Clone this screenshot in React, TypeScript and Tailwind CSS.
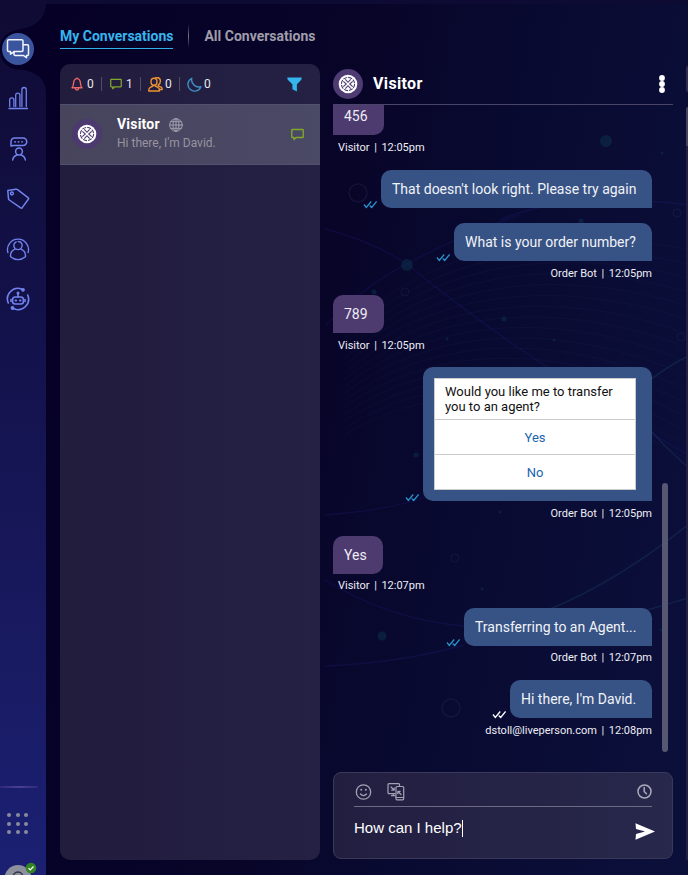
import React from "react";

const iconBase = { fill: "none", strokeLinecap: "round", strokeLinejoin: "round" } as const;

function Backdrop() {
  const waves = Array.from({ length: 16 }, (_, i) => i);
  return (
    <svg className="absolute inset-0" width="688" height="875" viewBox="0 0 688 875" fill="none">
      <g stroke="#2a4a80" strokeOpacity="0.09">
        {waves.map((i) => (
          <path key={i} d={`M345 ${330 + i * 7}C440 ${240 + i * 9} 570 ${225 + i * 11} 688 ${250 + i * 14}`} />
        ))}
      </g>
      <g stroke="#2b2a9a" strokeOpacity="0.2" strokeWidth="1.3">
        <path d="M325 229Q370 240 407 264Q460 235 520 215" />
        <path d="M407 264Q365 285 325 326" />
        <path d="M407 264Q510 350 688 455" />
        <path d="M325 515Q390 510 425 497Q500 490 560 470" />
        <path d="M325 580Q390 620 464 626" />
        <path d="M325 666Q400 663 464 645" />
        <path d="M500 220Q570 190 688 205" />
      </g>
      <g stroke="#27557c" strokeOpacity="0.25" strokeWidth="1.6">
        <path d="M520 620Q600 595 688 525" />
        <path d="M640 612Q665 605 688 598" />
        <path d="M650 380Q670 365 688 356" />
        <path d="M652 432Q670 452 688 467" />
      </g>
      <g stroke="#34345c" strokeOpacity="0.28">
        <circle cx="358" cy="193" r="9" strokeWidth="1.5" />
        <circle cx="451" cy="708" r="9" strokeWidth="1.5" />
        <circle cx="405" cy="292" r="4" />
        <circle cx="677" cy="213" r="4" />
        <circle cx="681" cy="337" r="4" />
        <circle cx="455" cy="558" r="4" />
      </g>
      <g fill="#0e4358" fillOpacity="0.38">
        <circle cx="606" cy="141" r="6" />
        <circle cx="407" cy="265" r="6" />
        <circle cx="382" cy="636" r="4.5" />
        <circle cx="374" cy="292" r="2.5" />
        <circle cx="416" cy="455" r="2.5" />
        <circle cx="504" cy="319" r="2.5" />
        <circle cx="581" cy="221" r="2.5" />
        <circle cx="662" cy="153" r="1.5" />
        <circle cx="447" cy="339" r="1.5" />
        <circle cx="554" cy="340" r="1.5" />
        <circle cx="482" cy="589" r="1.5" />
        <circle cx="661" cy="630" r="1.5" />
        <circle cx="500" cy="512" r="1.5" />
      </g>
    </svg>
  );
}

function BarsIcon() {
  return (
    <svg {...iconBase} width="24" height="24" viewBox="0 0 24 24" stroke="#7183ed" strokeWidth="1.3">
      <path d="M3 22.500h18.500M3.700 20.500V14a2.100 2.100 0 0 1 4.200 0V20.500M9.700 20.500V9.200a2.100 2.100 0 0 1 4.200 0V20.500M15.900 20.500V3.700a2.200 2.200 0 0 1 4.400 0V20.500" />
    </svg>
  );
}

function ConsultIcon() {
  return (
    <svg {...iconBase} width="24" height="26" viewBox="0 0 24 26" stroke="#7183ed" strokeWidth="1.5">
      <path d="M5 10V5.500a3.500 3.500 0 0 1 3.500-3.500h8.500a3.700 3.700 0 0 1 0 7.500H7.500L5 10Z" />
      <path d="M9 5.800h.1M12.500 5.800h.1M16 5.800h.1" strokeWidth="1.800" />
      <circle cx="13" cy="15.500" r="3.400" />
      <path d="M6.700 24c.4-2.500 2-4.300 4.300-5M15 19c2.300.7 3.900 2.500 4.300 5" />
    </svg>
  );
}

function TagIcon() {
  return (
    <svg {...iconBase} width="24" height="24" viewBox="0 0 24 24" stroke="#7183ed" strokeWidth="1.5">
      <path d="M1.800 3.500 9.800 2.300Q11 2.200 11.600 2.700L22.300 10.900Q23 11.400 22.500 12L16 20.900Q15.500 21.500 14.700 20.900L3.300 13Q2.700 12.600 2.500 11.800L1.800 3.500Z" />
      <circle cx="5.900" cy="6.500" r="1.400" />
    </svg>
  );
}

function ProfileIcon() {
  return (
    <svg {...iconBase} width="24" height="24" viewBox="0 0 24 24" stroke="#7183ed" strokeWidth="1.4">
      <path d="M1.900 15.500A10.500 10.500 0 1 1 22.100 15.500M5 20A10.500 10.500 0 0 0 19 20" />
      <path d="M8.900 11.300A4 4 0 0 1 10.200 4.900M12.300 4.500A4 4 0 0 1 15.100 11.300" />
      <path d="M9 12.200C6 13.400 4.300 16.300 4.500 19.500M15 12.200C18 13.400 19.700 16.300 19.500 19.500M9.600 11.900Q12 13.300 14.400 11.900" />
    </svg>
  );
}

function BotIcon() {
  return (
    <svg {...iconBase} width="24" height="24" viewBox="0 0 24 24" stroke="#7183ed" strokeWidth="1.600">
      <path d="M2.300 16A10.500 10.500 0 0 1 16 2.200M21.700 8A10.500 10.500 0 0 1 8 21.800" />
      <circle cx="17" cy="2.800" r="1.100" fill="#7183ed" />
      <circle cx="6.500" cy="21" r="1.100" fill="#7183ed" />
      <rect x="6.500" y="10" width="11" height="7" rx="2.800" />
      <path d="M12 10V6.500M5 12.500v2M19 12.500v2" />
      <circle cx="12" cy="6" r="1.500" fill="#7183ed" stroke="none" />
      <path d="M9.500 13.500h.6M14 13.500h.6" strokeWidth="2" />
    </svg>
  );
}

function ChatsIcon() {
  return (
    <svg {...iconBase} width="24" height="22" viewBox="0 0 24 22" stroke="#f3f4fa" strokeWidth="1.500">
      <path d="M8 13.800 4.500 16V13.500H2.700Q1.500 13.500 1.500 12.300V3Q1.500 1.800 2.700 1.800h13.100Q17 1.800 17 3v9.300q0 1.200-1.200 1.200H8Z" />
      <path d="M17.500 6.800H21.300Q22.500 6.800 22.500 8v8.300q0 1.200-1.200 1.200h-.8v2.200L17.500 17.500H9.200Q8 17.500 8 16.300v-2.500" />
    </svg>
  );
}

function Sidebar() {
  return (
    <aside className="relative flex w-[46px] shrink-0 flex-col">
      <svg className="absolute inset-0" width="46" height="875" viewBox="0 0 46 875">
        <defs>
          <linearGradient id="rail" x1="0" y1="0" x2="0" y2="1">
            <stop offset="0" stopColor="#0f0b34" />
            <stop offset="0.35" stopColor="#131149" />
            <stop offset="0.7" stopColor="#18195e" />
            <stop offset="1" stopColor="#1b2073" />
          </linearGradient>
        </defs>
        <path
          fill="url(#rail)"
          d="M0 0H46V4C45 19 36 25 25 28L14 30.500C7 32.500 1 39 0 45V53C1 62 9 69 18 69.500C34 70 46 78 46 93V875H0Z"
        />
      </svg>
      <nav className="relative flex flex-col items-center pr-[10px] pt-[33px]">
        <div className="flex size-8 items-center justify-center rounded-full bg-[#3b549e]"><ChatsIcon /></div>
        <div className="mt-[21px]"><BarsIcon /></div>
        <div className="mt-[26px]"><ConsultIcon /></div>
        <div className="mt-[25px]"><TagIcon /></div>
        <div className="mt-[26px]"><ProfileIcon /></div>
        <div className="mt-[26px]"><BotIcon /></div>
      </nav>
      <div className="relative mt-auto h-[89px]">
        <div className="h-[2px] w-[38px] bg-linear-to-r from-[#2c2a78] via-[#4a4190] to-[#2c297d]" />
        <div className="ml-[7px] mt-[25px] grid w-[21px] grid-cols-3 gap-x-[4.700px] gap-y-[4.500px]">
          {Array.from({ length: 9 }, (_, i) => (
            <span key={i} className="size-1 rounded-full bg-[#898b9c]" />
          ))}
        </div>
        <svg className="absolute left-0 top-[75px]" width="44" height="14" viewBox="0 0 44 14">
          <circle cx="18" cy="17.500" r="13.500" fill="#8c8f9e" />
          <circle cx="18" cy="16" r="5" fill="none" stroke="#313342" strokeWidth="1.300" />
          <circle cx="31" cy="7" r="5.300" fill="#318421" />
          <path d="m28.500 7.200 1.800 1.700 3.200-3.400" fill="none" stroke="white" strokeWidth="1.300" />
        </svg>
      </div>
    </aside>
  );
}

function Emblem({ bg }: { bg: string }) {
  return (
    <svg width="30" height="30" viewBox="0 0 30 30">
      <circle cx="15" cy="15" r="15" fill={bg} />
      <circle cx="15" cy="15" r="9.300" fill="white" />
      <g fill="none" stroke="#4b3b70" strokeWidth="1.100">
        <circle cx="15" cy="15" r="6.600" strokeDasharray="4.100 1.083" strokeWidth="1.100" />
        <path d="m12.300 10.300 2.700 3 2.700-3M12.300 19.700l2.700-3 2.700 3M10.300 12.300l3 2.700-3 2.700M19.700 12.300l-3 2.700 3 2.700" />
      </g>
    </svg>
  );
}

function BubbleIcon({ size = 13 }: { size?: number }) {
  return (
    <svg {...iconBase} width={size} height={size} viewBox="0 0 13 13" stroke="#82a829" strokeWidth="1.350">
      <path d="M1.300 1.500h10.400q.5 0 .5.500v7q0 .5-.5.500H5L3 11.600V9.500H1.300q-.5 0-.5-.5V2q0-.5.500-.5Z" />
    </svg>
  );
}

function CountIcon({ kind }: { kind: string }) {
  if (kind === "bell")
    return (
      <svg {...iconBase} width="12" height="14" viewBox="0 0 12 14" stroke="#ed6668" strokeWidth="1.350">
        <path d="M6 1.300V.8M1 10.700c1-.9 1.400-2 1.500-4.200C2.700 3.500 4 1.600 6 1.600s3.300 1.900 3.500 4.900c.1 2.200.5 3.300 1.500 4.200H1ZM4.500 12a1.600 1.600 0 0 0 3 0" />
      </svg>
    );
  if (kind === "group")
    return (
      <svg {...iconBase} width="15" height="15" viewBox="0 0 15 15" stroke="#eb9232" strokeWidth="1.400">
        <ellipse cx="6" cy="4.700" rx="3" ry="3.500" />
        <path d="M7 1.500C8-.1 12.400.3 12.400 4c0 2-1 3.400-2.200 4l.4 1.200 2.500 1c.8.4 1.100 1.200 1.100 2.300H12M5 8v1l-2.800 1.300C1 10.800.7 12 .7 14h10.800c0-2-.4-3.200-1.600-3.700L7.200 9V8" />
      </svg>
    );
  if (kind === "moon")
    return (
      <svg {...iconBase} width="15" height="15" viewBox="0 0 15 15" stroke="#3f8fc5" strokeWidth="1.400">
        <path d="M4.800 1.300A6.700 6.700 0 1 0 13.900 9.700C8.600 11.200 3.600 6.500 4.800 1.300Z" />
      </svg>
    );
  return <BubbleIcon size={12} />;
}

function Globe() {
  return (
    <svg {...iconBase} width="14" height="14" viewBox="0 0 14 14" stroke="#a2a1b2">
      <circle cx="7" cy="7" r="6.300" />
      <ellipse cx="7" cy="7" rx="3" ry="6.300" />
      <path d="M7 .7v12.600M.7 7h12.600M1.700 3.700h10.600M1.700 10.300h10.600" />
    </svg>
  );
}

const divider = "h-[14px] w-px bg-[#514d69]";

function ConversationList() {
  return (
    <section className="flex h-[796px] w-[260px] flex-col overflow-hidden rounded-[10px] bg-linear-to-r from-[#221c3d] to-[#242145]">
      <div className="flex h-10 items-center text-[12px] text-[#e9e8ee]">
        <span className="ml-[11px] flex w-[30px] items-center justify-between pr-[7px]"><CountIcon kind="bell" /></span>
        <span className="-ml-[14px] w-[14px]">0</span>
        <span className={divider} />
        <span className="ml-[8px] mb-[1px] w-[16px]"><CountIcon kind="chat" /></span>
        <span className="w-[14px]">1</span>
        <span className={divider} />
        <span className="ml-[7px] w-[17px]"><CountIcon kind="group" /></span>
        <span className="w-[14px]">0</span>
        <span className={divider} />
        <span className="ml-[7px] w-[17px]"><CountIcon kind="moon" /></span>
        <span>0</span>
        <svg className="ml-auto mr-[18px]" width="15" height="15" viewBox="0 0 15 15" fill="#34b5ed">
          <path d="M.2.400h14.600l-.5 2.300-4.400 4.600V14.500l-4.500-2.200V7.300L.7 2.700Z" />
        </svg>
      </div>
      <div className="flex h-[61px] items-center border-y border-[#50506f] bg-linear-to-r from-[#47445c] to-[#4a4966]">
        <div className="ml-3 -mt-[2px]"><Emblem bg="#4c3970" /></div>
        <div className="ml-[15px] pb-[3px]">
          <div className="flex h-[20px] items-center gap-[9px] text-[14px] font-bold tracking-[0.200px] text-white">Visitor<Globe /></div>
          <div className="text-[12px] leading-[17px] text-[#97949f]">Hi there, I'm David.</div>
        </div>
        <div className="ml-auto mr-4"><BubbleIcon /></div>
      </div>
    </section>
  );
}

function Ticks({ color }: { color: string }) {
  return (
    <svg className="mr-[4px] shrink-0 -mb-[1px]" width="14" height="9" viewBox="0 0 14 9" fill="none" stroke={color} strokeWidth="1.300">
      <path d="m1 4.500 2.300 3L8.200 1.500M6.700 5.500l2 2L13.600 1.500" />
    </svg>
  );
}

function Meta({ who, time, side, gap = "mt-[7px] -mb-px" }: { who: string; time: string; side: "in" | "out"; gap?: string }) {
  return (
    <div className={`${gap} flex h-3 shrink-0 items-center gap-[4.600px] whitespace-nowrap text-[11px] leading-3 text-[#eeeef5] ${side === "in" ? "pl-[5px]" : "justify-end"}`}>
      <span>{who}</span><span>|</span><span>{time}</span>
    </div>
  );
}

function Incoming({ text, width, className }: { text: string; width: string; className: string }) {
  return (
    <div className={`${className} ${width} flex h-[38px] shrink-0 items-center rounded-[10px] rounded-bl-none bg-[#4d3b70] pl-[11px] text-[14px] text-[#efedf5]`}>
      {text}
    </div>
  );
}

function Outgoing({ text, width, className, tick = "#2a90cb" }: { text: string; width: string; className: string; tick?: string }) {
  return (
    <div className={`${className} flex shrink-0 items-end justify-end`}>
      <Ticks color={tick} />
      <div className={`${width} flex h-[38px] items-center whitespace-nowrap rounded-[10px] rounded-br-none bg-[#375284] pl-[11px] text-[14px] text-[#f1f3f9]`}>{text}</div>
    </div>
  );
}

function Composer() {
  return (
    <div className="mt-[20px] flex h-[87px] flex-col rounded-[8px] border border-[#3b3959] bg-linear-to-r from-[#221e40] to-[#27284c] pl-5 pr-5">
      <div className="flex h-[34px] items-center border-b border-[#6c6a85] pt-[4px]">
        <svg {...iconBase} width="18" height="18" viewBox="0 0 18 18" stroke="#a3a2b5" strokeWidth="1.300">
          <circle cx="9.500" cy="9" r="7.200" />
          <path d="M6.500 11q3 3.200 6 0" />
          <path d="M7.200 6.800h.1M11.800 6.800h.1" strokeWidth="1.900" />
        </svg>
        <svg {...iconBase} className="ml-[15px]" width="18" height="18" viewBox="0 0 18 18" stroke="#a3a2b5" strokeWidth="1.200">
          <path d="M12.500 3V1.500q0-.8-.8-.8H2Q1 .7 1 1.700v8q0 1 1 1h6M4.500 12.700H8M6.300 10.700v2M4 4l3 3M7.200 4.800v2.400H4.700" />
          <rect x="9" y="3.500" width="7.700" height="13.300" rx="1" />
          <path d="M9 14.500h7.500M14 11.500l-3-3M10.800 10.700V8.300h2.400" />
        </svg>
        <svg {...iconBase} className="mb-[1px] ml-auto" width="15" height="15" viewBox="0 0 15 15" stroke="#aaa9bb" strokeWidth="1.500">
          <circle cx="7.500" cy="7.500" r="6.500" />
          <path d="M7.200 3.500v4l2.200 2.300" />
        </svg>
      </div>
      <div className="flex items-center pt-[9px] font-['Liberation_Sans',Arial,sans-serif] text-[15px] leading-[22px] text-white">
        <span>How can I help?</span>
        <span className="h-[17px] w-px bg-white" />
        <svg className="-mr-[3px] ml-auto mt-[7px]" width="20" height="17" viewBox="0 0 20 17" fill="white">
          <path d="M.500.300 20 8.500.500 16.700 1 11 10 8.500 1 6Z" />
        </svg>
      </div>
    </div>
  );
}

function Chat() {
  return (
    <section className="ml-[13px] flex h-[795px] w-[340px] flex-col">
      <header className="flex h-[41px] shrink-0 items-center border-b border-[#494569]">
        <Emblem bg="#4d3b72" />
        <h1 className="ml-[10px] text-[16px] font-bold tracking-[0.350px] text-white">Visitor</h1>
        <svg className="ml-auto mr-2" width="6" height="18" viewBox="0 0 6 18" fill="white">
          <circle cx="3" cy="3" r="2.900" /><circle cx="3" cy="9" r="2.900" /><circle cx="3" cy="15" r="2.900" />
        </svg>
      </header>
      <div className="flex h-[647px] shrink-0">
        <div className="flex w-[319px] flex-col overflow-hidden">
          <Incoming text="456" width="w-[51px]" className="-mt-2" />
          <Meta who="Visitor" time="12:05pm" side="in" />
          <Outgoing text="That doesn't look right. Please try again" width="w-[271px]" className="mt-[17px]" />
          <Outgoing text="What is your order number?" width="w-[198px]" className="mt-[15px]" />
          <Meta who="Order Bot" time="12:05pm" side="out" />
          <Incoming text="789" width="w-[51px]" className="mt-4" />
          <Meta who="Visitor" time="12:05pm" side="in" />
          <div className="mt-4 flex shrink-0 items-end justify-end">
            <Ticks color="#2a90cb" />
            <div className="h-[134px] w-[229px] rounded-[10px] rounded-br-none bg-[#375284] pl-[11px] pt-[11px]">
              <div className="h-[112px] w-[202px] divide-y divide-[#cccccc] border border-[#cccccc] bg-white text-[13px] leading-[15px] text-[#111111]">
                <div className="h-[41px] whitespace-nowrap pl-[10px] pt-[5px]">Would you like me to transfer<br />you to an agent?</div>
                <div className="flex h-[35px] items-center justify-center text-[#1b65ad]">Yes</div>
                <div className="flex h-[34px] items-center justify-center text-[#1b65ad]">No</div>
              </div>
            </div>
          </div>
          <Meta who="Order Bot" time="12:05pm" side="out" />
          <Incoming text="Yes" width="w-[50px]" className="mt-[17px]" />
          <Meta who="Visitor" time="12:07pm" side="in" gap="mt-[6px] -mb-px" />
          <Outgoing text="Transferring to an Agent..." width="w-[188px]" className="mt-[17px]" />
          <Meta who="Order Bot" time="12:07pm" side="out" gap="mt-[6px] -mb-px" />
          <Outgoing text="Hi there, I'm David." width="w-[142px]" className="mt-[17px]" tick="#ffffff" />
          <Meta who="dstoll@liveperson.com" time="12:08pm" side="out" />
        </div>
        <div className="ml-[10px] mt-[378px] h-[269px] w-[6px] rounded-full bg-[#575673]" />
      </div>
      <Composer />
    </section>
  );
}

export default function App() {
  return (
    <div className="relative h-[875px] w-[688px] overflow-hidden bg-[linear-gradient(100deg,#060027_8%,#080529_46%,#090a31_65%,#0b103b_100%)] font-[Roboto,sans-serif]">
      <Backdrop />
      <div className="relative flex h-full">
        <Sidebar />
        <div className="flex min-w-0 grow flex-col">
          <div className="h-1 shrink-0 bg-[#0d0a34]" />
          <div className="ml-[14px] mt-[20px] flex h-[25px] shrink-0 text-[14px] font-bold">
            <div className="h-[25px] whitespace-nowrap border-b border-[#31afe8] text-[#35b5ed] leading-[25px]">My Conversations</div>
            <div className="ml-[15px] h-6 w-px bg-linear-to-b from-transparent via-[#77758a] to-transparent" />
            <div className="ml-[15px] whitespace-nowrap leading-[25px] text-[#9f9da9]">All Conversations</div>
          </div>
          <div className="ml-[14px] mt-[15px] flex">
            <ConversationList />
            <Chat />
            <div className="ml-[13px] mt-[2px] flex w-[2px] flex-col overflow-hidden">
              <div className="h-[26px] rounded-l-full bg-[#332b50]" />
              <div className="mt-[15px] h-[39px] rounded-tl bg-[#48445f]" />
              <div className="grow bg-[#242044]" />
            </div>
          </div>
        </div>
      </div>
    </div>
  );
}
